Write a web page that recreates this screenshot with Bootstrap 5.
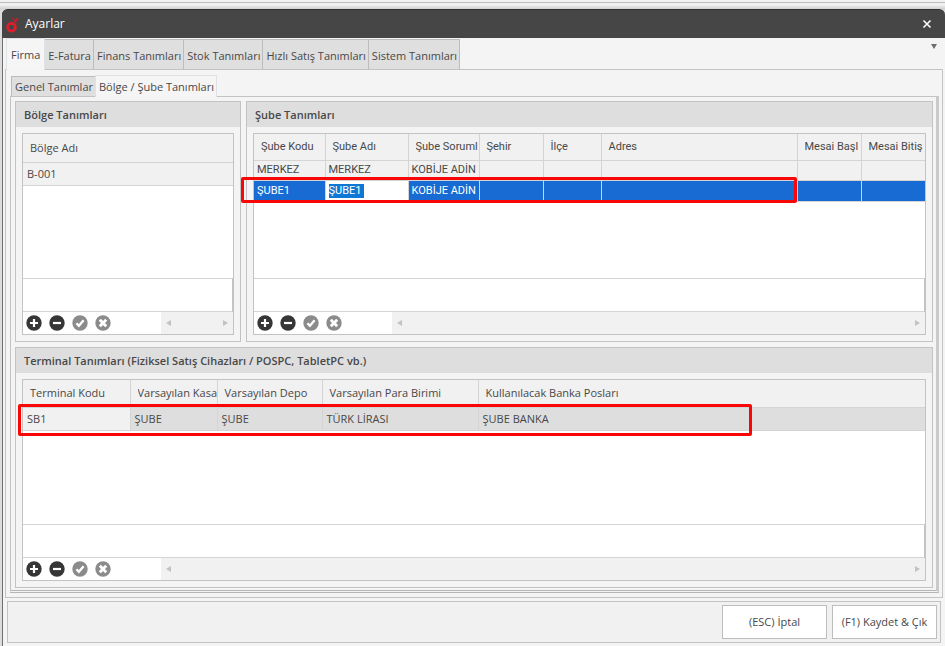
<!DOCTYPE html>
<html lang="tr">
<head>
<meta charset="utf-8">
<meta name="viewport" content="width=device-width, initial-scale=1">
<title>Ayarlar</title>
<link rel="stylesheet" href="https://cdn.jsdelivr.net/npm/bootstrap@5.3.0/dist/css/bootstrap.min.css">
<style>
:root{--line:#c3c3c3;--soft:#d4d4d4;--face:#f1f1f1;--bar:#dedede;--ink:#484848}
body{font-family:"Open Sans","Noto Sans",sans-serif;font-size:11px;line-height:16px;color:var(--ink);
 background:linear-gradient(#f2f2f2 0 2px,#bdbdbd 2px 3px,#f0f0f0 3px 5px,#cfcfcf 9px,#dcdcdc 10px)}
.desk{padding:9px 0 0 2px}
.dialog-win{background:#f4f4f4;border-left:1px solid #6f6f6f;border-radius:6px 6px 0 0}
.title-bar{background:#464646;color:#fff;height:29px;border-radius:6px 6px 0 0;padding:0 13px 0 4px;gap:6px;margin-left:-1px;border-top:1px solid #2f2f2f}
.title-bar h1{font-size:12px;line-height:16px}
.title-bar button,.tab-menu{background:none;border:0;padding:0;line-height:0;color:inherit}
.tab-strip{padding-top:1px}
.main-tabs .nav-link,.sub-tabs .nav-link{color:var(--ink);background:#dfdfdf;border:1px solid #bcbcbc;border-bottom:0;border-radius:0;margin:0 0 0 -1px}
.main-tabs .nav-link{height:30px;padding:8px 2px 0 3px}
.main-tabs .nav-link.active,.sub-tabs .nav-link.active{background:#f5f5f5;position:relative;color:var(--ink)}
.main-tabs .nav-link.active{height:32px;margin:-1px 0 -1px 0;padding:8px 4px 0 4px}
.main-tabs,.sub-tabs{border:0;flex-wrap:nowrap;white-space:nowrap}
.main-tabs{padding-left:3px}
.tab-menu{padding:5px 8px 0 0;color:#6d6d6d;align-self:flex-start}
.outer-pane{border:1px solid var(--line);margin:0 2px 3px 2px;padding:5px 3px 4px 4px}
.sub-tabs{padding-left:2px}
.sub-tabs .nav-link{height:20px;padding:2px 2px 0 3px;margin-top:1px}
.sub-tabs .nav-link.active{height:22px;margin:0 0 -1px -1px;padding-top:3px}
.inner-pane{border:1px solid var(--line);border-right:3px solid #cacaca;border-bottom:3px double #b5b5b5;padding:4px 3px 2px 4px;gap:5px}
.panel-row{gap:5px;flex:1 1 1px}
.group-panel{border:1px solid var(--line);background:#f4f4f4}
.group-panel h2{font-size:11px;line-height:16px;font-weight:600;background:var(--bar);padding:5px 8px 4px;margin:0;height:25px}
.group-body{padding:6px}
.region-panel{width:226px;flex:none}
.lower-panel{flex:1 1 0}
.data-grid{border:1px solid var(--line);background:#fff;position:relative}
.data-grid table{width:100%;table-layout:fixed;border-collapse:collapse}
.data-grid th,.data-grid td{font-weight:400;white-space:nowrap;overflow:hidden;border-right:1px solid var(--soft);border-bottom:1px solid var(--soft);background:var(--face);padding:0 4px}
.data-grid th{height:28px;padding:0 0 0 7px}
.data-grid th span{display:block;overflow:hidden}
.data-grid td{height:23px}
.data-grid th:last-child,.data-grid td:last-child{border-right:0}
.branch-grid table{font-family:Roboto,"Liberation Sans",sans-serif;font-size:11px;line-height:14px}
.branch-grid th{height:26px}
.branch-grid td{height:20px;padding:0 3px}
.branch-grid .picked td{background:#176bd3;color:#fff;height:21px}
.branch-grid .picked td.editing{background:#fff}
.editing input{border:0;padding:0;width:35px;height:14px;background:#0f78d4;color:#fff;font:inherit;display:block}
.terminal-grid .picked td{background:var(--bar)}
.terminal-grid .picked td:first-child{background:var(--face)}
.summary-row{height:34px;border-top:1px solid var(--soft);border-bottom:1px solid var(--soft);border-right:1px solid var(--line)}
.grid-foot{height:22px}
.grid-tools{width:138px;padding-left:3px;gap:7px;flex:none}
.grid-tools button{border:0;background:none;padding:0;line-height:0}
.scroll-track{background:var(--face);color:#c2c2c2;padding:0 5px}
.marker{position:absolute;border:3px solid #f90606;border-radius:2px;pointer-events:none}
.branch-marker{left:-13px;right:128px;top:43px;height:26px}
.terminal-marker{left:-5px;width:734px;top:24px;height:32px}
.action-bar{border:1px solid var(--line);margin:0 4px 3px 4px;padding:3px;gap:5px;background:var(--face)}
.action-bar button{width:105px;height:34px;background:#fff;border:1px solid #bdbdbd;color:var(--ink);padding:0}
</style>
<script src="https://cdn.jsdelivr.net/npm/bootstrap@5.3.0/dist/js/bootstrap.bundle.min.js"></script>
</head>
<body>
<svg class="d-none" aria-hidden="true">
 <symbol id="i-add" viewBox="0 0 16 16"><circle cx="8" cy="8" r="7.7" fill="#363636"/><path d="M8 4v8M4 8h8" stroke="#fff" stroke-width="2.2"/></symbol>
 <symbol id="i-remove" viewBox="0 0 16 16"><circle cx="8" cy="8" r="7.7" fill="#363636"/><path d="M4 8h8" stroke="#fff" stroke-width="2.2"/></symbol>
 <symbol id="i-ok" viewBox="0 0 16 16"><circle cx="8" cy="8" r="7.7" fill="#8b8b8b"/><path d="M4.4 8.2l2.5 2.6 4.7-5.6" stroke="#fff" stroke-width="2.3" fill="none"/></symbol>
 <symbol id="i-cancel" viewBox="0 0 16 16"><circle cx="8" cy="8" r="7.7" fill="#8b8b8b"/><path d="M4.8 4.8l6.4 6.4M11.2 4.8l-6.4 6.4" stroke="#fff" stroke-width="2.9"/></symbol>
 <symbol id="i-left" viewBox="0 0 5 6"><path d="M5 0v6L0 3z" fill="currentColor"/></symbol>
 <symbol id="i-right" viewBox="0 0 5 6"><path d="M0 0v6l5-3z" fill="currentColor"/></symbol>
</svg>
<div class="desk min-vh-100 d-flex flex-column">
<div class="dialog-win flex-grow-1 d-flex flex-column">
 <header class="title-bar d-flex align-items-center">
  <svg width="13" height="17" viewBox="0 0 13 17"><circle cx="5.5" cy="11.2" r="3.9" fill="none" stroke="#db1f2c" stroke-width="2.9"/><path d="M6.5 2.5l4 4.5M8 5.5l3-2" stroke="#b3262e" stroke-width="1.8"/><circle cx="6.8" cy="2.2" r="1.2" fill="#8f2b31"/><circle cx="11" cy="3.6" r="1.5" fill="#b3262e"/></svg>
  <h1 class="mb-0 fw-normal me-auto">Ayarlar</h1>
  <button type="button" aria-label="Kapat"><svg width="10" height="10" viewBox="0 0 10 10"><path d="M1.5 1.5l7 7M8.5 1.5l-7 7" stroke="#fff" stroke-width="1.6"/></svg></button>
 </header>
 <div class="tab-strip d-flex justify-content-between align-items-end">
  <nav class="nav nav-tabs main-tabs">
   <a class="nav-link active" href="#firma">Firma</a><a class="nav-link" href="#efatura">E-Fatura</a><a class="nav-link" href="#finans">Finans Tanımları</a><a class="nav-link" href="#stok">Stok Tanımları</a><a class="nav-link" href="#satis">Hızlı Satış Tanımları</a><a class="nav-link" href="#sistem">Sistem Tanımları</a>
  </nav>
  <button class="tab-menu" type="button" aria-label="Sekmeler"><svg width="6" height="5" viewBox="0 0 6 5"><path d="M0 0h6L3 5z" fill="currentColor"/></svg></button>
 </div>
 <main class="outer-pane flex-grow-1 d-flex flex-column" id="firma">
  <nav class="nav nav-tabs sub-tabs align-items-end">
   <a class="nav-link" href="#genel">Genel Tanımlar</a><a class="nav-link active" href="#bolge">Bölge / Şube Tanımları</a>
  </nav>
  <div class="inner-pane flex-grow-1 d-flex flex-column" id="bolge">
   <div class="panel-row d-flex">
    <section class="group-panel region-panel d-flex flex-column">
     <h2>Bölge Tanımları</h2>
     <div class="group-body flex-grow-1 d-flex flex-column">
      <div class="data-grid flex-grow-1 d-flex flex-column">
       <table><thead><tr><th scope="col">Bölge Adı</th></tr></thead><tbody><tr><td>B-001</td></tr></tbody></table>
       <div class="summary-row mt-auto"></div>
       <div class="grid-foot d-flex">
        <div class="grid-tools d-flex align-items-center">
         <button type="button" aria-label="Ekle"><svg width="16" height="16"><use href="#i-add"/></svg></button>
         <button type="button" aria-label="Sil"><svg width="16" height="16"><use href="#i-remove"/></svg></button>
         <button type="button" aria-label="Onayla"><svg width="16" height="16"><use href="#i-ok"/></svg></button>
         <button type="button" aria-label="Vazgeç"><svg width="16" height="16"><use href="#i-cancel"/></svg></button>
        </div>
        <div class="scroll-track flex-grow-1 d-flex justify-content-between align-items-center"><svg width="5" height="6"><use href="#i-left"/></svg><svg width="5" height="6"><use href="#i-right"/></svg></div>
       </div>
      </div>
     </div>
    </section>
    <section class="group-panel flex-grow-1 d-flex flex-column">
     <h2>Şube Tanımları</h2>
     <div class="group-body flex-grow-1 d-flex flex-column">
      <div class="data-grid branch-grid flex-grow-1 d-flex flex-column">
       <table>
        <colgroup><col width="71"><col width="83"><col width="71"><col width="64"><col width="58"><col><col width="64"><col width="64"></colgroup>
        <thead><tr><th scope="col">Şube Kodu</th><th scope="col">Şube Adı</th><th scope="col"><span>Şube Soruml</span></th><th scope="col">Şehir</th><th scope="col">İlçe</th><th scope="col">Adres</th><th scope="col"><span>Mesai Başl</span></th><th scope="col">Mesai Bitiş</th></tr></thead>
        <tbody>
         <tr><td>MERKEZ</td><td>MERKEZ</td><td>KOBİJE ADİN</td><td></td><td></td><td></td><td></td><td></td></tr>
         <tr class="picked"><td>ŞUBE1</td><td class="editing"><input type="text" value="ŞUBE1" aria-label="Şube Adı"></td><td>KOBİJE ADİN</td><td></td><td></td><td></td><td></td><td></td></tr>
        </tbody>
       </table>
       <div class="marker branch-marker"></div>
       <div class="summary-row mt-auto"></div>
       <div class="grid-foot d-flex">
        <div class="grid-tools d-flex align-items-center">
         <button type="button" aria-label="Ekle"><svg width="16" height="16"><use href="#i-add"/></svg></button>
         <button type="button" aria-label="Sil"><svg width="16" height="16"><use href="#i-remove"/></svg></button>
         <button type="button" aria-label="Onayla"><svg width="16" height="16"><use href="#i-ok"/></svg></button>
         <button type="button" aria-label="Vazgeç"><svg width="16" height="16"><use href="#i-cancel"/></svg></button>
        </div>
        <div class="scroll-track flex-grow-1 d-flex justify-content-between align-items-center"><svg width="5" height="6"><use href="#i-left"/></svg><svg width="5" height="6"><use href="#i-right"/></svg></div>
       </div>
      </div>
     </div>
    </section>
   </div>
   <section class="group-panel lower-panel d-flex flex-column">
    <h2>Terminal Tanımları (Fiziksel Satış Cihazları / POSPC, TabletPC vb.)</h2>
    <div class="group-body flex-grow-1 d-flex flex-column">
     <div class="data-grid terminal-grid flex-grow-1 d-flex flex-column">
      <table>
       <colgroup><col width="107"><col width="87"><col width="105"><col width="156"><col></colgroup>
       <thead><tr><th scope="col">Terminal Kodu</th><th scope="col"><span>Varsayılan Kasa</span></th><th scope="col">Varsayılan Depo</th><th scope="col">Varsayılan Para Birimi</th><th scope="col">Kullanılacak Banka Posları</th></tr></thead>
       <tbody><tr class="picked"><td>SB1</td><td>ŞUBE</td><td>ŞUBE</td><td>TÜRK LİRASI</td><td>ŞUBE BANKA</td></tr></tbody>
      </table>
      <div class="marker terminal-marker"></div>
      <div class="summary-row mt-auto"></div>
      <div class="grid-foot d-flex">
       <div class="grid-tools d-flex align-items-center">
        <button type="button" aria-label="Ekle"><svg width="16" height="16"><use href="#i-add"/></svg></button>
        <button type="button" aria-label="Sil"><svg width="16" height="16"><use href="#i-remove"/></svg></button>
        <button type="button" aria-label="Onayla"><svg width="16" height="16"><use href="#i-ok"/></svg></button>
        <button type="button" aria-label="Vazgeç"><svg width="16" height="16"><use href="#i-cancel"/></svg></button>
       </div>
       <div class="scroll-track flex-grow-1 d-flex justify-content-between align-items-center"><svg width="5" height="6"><use href="#i-left"/></svg><svg width="5" height="6"><use href="#i-right"/></svg></div>
      </div>
     </div>
    </div>
   </section>
  </div>
 </main>
 <footer class="action-bar d-flex justify-content-end">
  <button type="button">(ESC) İptal</button>
  <button type="button">(F1) Kaydet &amp; Çık</button>
 </footer>
</div>
</div>
</body>
</html>
